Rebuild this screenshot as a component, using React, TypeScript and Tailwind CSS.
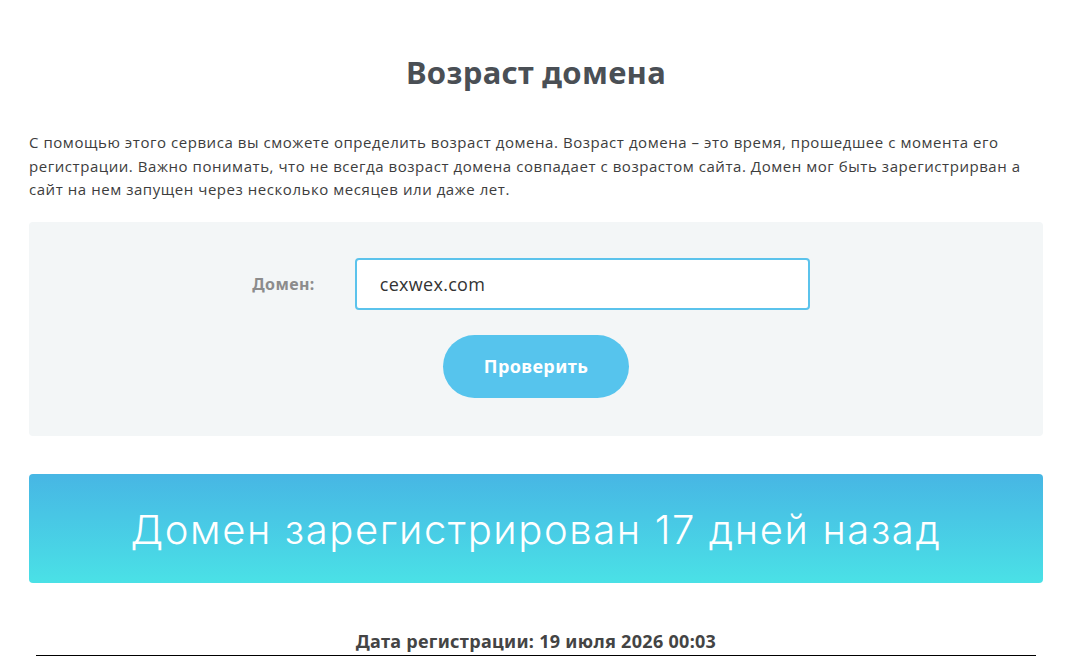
export default function App() {
  return (
    <div className="min-h-screen bg-white" style={{ fontFamily: "'Open Sans', Lato, sans-serif" }}>
      <div className="ml-[29px] w-[1014px] pt-[50px]">
        <h1
          className="text-center text-[31px] leading-[44px] font-bold tracking-[0.3px] text-[#4a4f55]"
          style={{ fontFamily: "'Noto Sans', sans-serif" }}
        >
          Возраст домена
        </h1>

        <p className="mt-[37px] text-[15px] leading-[23.5px] tracking-[0.55px] text-[#3d3d3d]">
          С помощью этого сервиса вы сможете определить возраст домена. Возраст домена – это время, прошедшее с момента его
          <br />
          регистрации. Важно понимать, что не всегда возраст домена совпадает с возрастом сайта. Домен мог быть зарегистрирван а
          <br />
          сайт на нем запущен через несколько месяцев или даже лет.
        </p>

        <div className="mt-[20px] rounded bg-[#f3f6f7] pt-[36px] pb-[38px]">
          <div className="flex items-center justify-center gap-10 pr-[10px]">
            <label
              className="text-[16px] font-bold tracking-[0.4px] text-[#8c8c8c]"
              style={{ fontFamily: "'Noto Sans', sans-serif" }}
            >
              Домен:
            </label>
            <input
              defaultValue="cexwex.com"
              className="h-[52px] w-[455px] rounded border-2 border-[#5bc3ec] bg-white px-[23px] text-[18px] tracking-[0.3px] text-[#333] outline-none"
            />
          </div>
          <div className="mt-[25px] flex justify-center">
            <button
              className="h-[63px] w-[186px] rounded-full bg-[#56c4ed] text-[18px] font-bold tracking-[0.4px] text-white"
              style={{ fontFamily: "'Noto Sans', sans-serif" }}
            >
              Проверить
            </button>
          </div>
        </div>

        <div className="mt-[38px] flex h-[109px] items-center justify-center rounded bg-gradient-to-b from-[#47b6e4] to-[#4ae1e6] pt-[3px]">
          <span
            className="text-[40px] font-light tracking-[1.6px] text-white"
            style={{ fontFamily: "Inter, 'Noto Sans', sans-serif" }}
          >
            Домен зарегистрирован 17 дней назад
          </span>
        </div>

        <div
          className="mt-[46px] text-center text-[18px] leading-[24px] font-bold tracking-[0.3px] text-[#444]"
          style={{ fontFamily: "'Noto Sans', sans-serif" }}
        >
          Дата регистрации: 19 июля 2026 00:03
        </div>
        <div className="mx-[7px] mt-[2px] border-t border-black" />
      </div>
    </div>
  );
}
